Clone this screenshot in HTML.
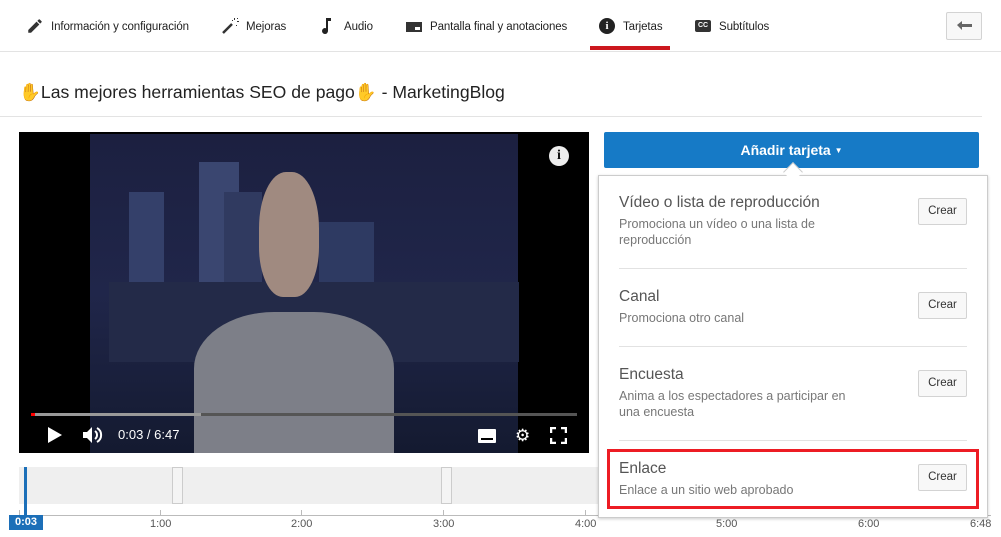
<!DOCTYPE html>
<html><head><meta charset="utf-8"><style>
*{margin:0;padding:0;box-sizing:border-box}
body{width:1001px;height:537px;overflow:hidden;background:#fff;font-family:"Liberation Sans",Arial,sans-serif;position:relative;color:#333}
.a{position:absolute}
.tab{position:absolute;top:21px;font-size:11.5px;color:#222;white-space:nowrap;letter-spacing:-0.1px}
.ic{position:absolute;top:17px}
.ttl{font-size:15.5px;color:#555}
.sub{font-size:12.5px;color:#777;line-height:16px}
.btn{position:absolute;left:918px;width:49px;height:27px;border:1px solid #d3d3d3;background:#f8f8f8;border-radius:2px;font-size:11.5px;color:#333;text-align:center;line-height:25px}
.sep{position:absolute;left:619px;width:348px;height:1px;background:#e2e2e2}
.tick{position:absolute;top:510px;width:1px;height:5px;background:#bbb}
.tl{position:absolute;top:518px;font-size:11px;color:#555}
</style></head><body>
<svg class="ic" style="left:26px" width="18" height="18" viewBox="0 0 24 24"><path fill="#333" d="M3 17.25V21h3.75L17.81 9.94l-3.75-3.75L3 17.25zM20.71 7.04a1 1 0 0 0 0-1.41l-2.34-2.34a1 1 0 0 0-1.41 0l-1.83 1.83 3.75 3.75 1.83-1.83z"/></svg>
<div class="tab" style="left:51px">Información y configuración</div>
<svg class="ic" style="left:221px" width="18" height="18" viewBox="0 0 18 18"><path stroke="#333" stroke-width="2.5" d="M2 16L11 7"/><path fill="#333" d="M13 1h1v2h-1zM16 4h2v1h-2zM11 3h1v1h-1zM15 8h1v1h-1zM16 1h1v1h-1z"/></svg>
<div class="tab" style="left:246px">Mejoras</div>
<svg class="ic" style="left:320px" width="14" height="18" viewBox="0 0 14 18"><path fill="#222" d="M6 1h5v3H8v10a3 3 0 1 1-2-2.8z"/></svg>
<div class="tab" style="left:344px">Audio</div>
<div class="a" style="left:406px;top:22px;width:16px;height:10px;background:#333"></div><div class="a" style="left:415px;top:27px;width:5px;height:3px;background:#fff"></div>
<div class="tab" style="left:430px">Pantalla final y anotaciones</div>
<div class="a" style="left:599px;top:18px;width:16px;height:16px;border-radius:50%;background:#222;color:#fff;font:bold 11px 'Liberation Serif';text-align:center;line-height:16px">i</div>
<div class="tab" style="left:623px">Tarjetas</div>
<div class="a" style="left:590px;top:46px;width:80px;height:4px;background:#cc181e"></div>
<div class="a" style="left:695px;top:20px;width:16px;height:12px;border-radius:2px;background:#333;color:#fff;font:bold 7px 'Liberation Sans';text-align:center;line-height:12px">CC</div>
<div class="tab" style="left:719px">Subtítulos</div>
<div class="a" style="left:946px;top:12px;width:36px;height:28px;border:1px solid #d3d3d3;background:#f8f8f8;border-radius:2px"><svg style="position:absolute;left:10px;top:8px" width="15" height="10" viewBox="0 0 15 10"><path fill="#666" d="M0 4l5-4v3h10v3H5v3z"/></svg></div>
<div class="a" style="left:0;top:51px;width:1001px;height:1px;background:#e3e3e3"></div>
<div class="a" style="left:19px;top:82px;font-size:17.6px;color:#222;white-space:nowrap">✋Las mejores herramientas SEO de pago✋ - MarketingBlog</div>
<div class="a" style="left:0;top:116px;width:982px;height:1px;background:#e3e3e3"></div>
<div class="a" style="left:19px;top:132px;width:570px;height:321px;background:#000;overflow:hidden">
 <div class="a" style="left:71px;top:2px;width:428px;height:319px;background:linear-gradient(#1c2040,#20264a 50%,#141a30)"></div>
 <div class="a" style="left:180px;top:30px;width:40px;height:150px;background:#3a4670"></div>
 <div class="a" style="left:110px;top:60px;width:35px;height:120px;background:#34406a"></div>
 <div class="a" style="left:205px;top:60px;width:38px;height:130px;background:#303a60"></div>
 <div class="a" style="left:300px;top:90px;width:55px;height:100px;background:#2e3a62"></div>
 <div class="a" style="left:90px;top:150px;width:410px;height:80px;background:#232a48"></div>
 <div class="a" style="left:240px;top:40px;width:60px;height:125px;border-radius:45% 45% 40% 40%;background:#a08a80"></div>
 <div class="a" style="left:175px;top:180px;width:200px;height:141px;border-radius:40% 40% 0 0;background:#7d7f88"></div>
 <div class="a" style="left:530px;top:14px;width:20px;height:20px;border-radius:50%;background:#eee;color:#111;font:bold 14px 'Liberation Serif';text-align:center;line-height:20px">i</div>
 <div class="a" style="left:12px;top:281px;width:546px;height:3px;background:#555"></div>
 <div class="a" style="left:12px;top:281px;width:170px;height:3px;background:#999"></div>
 <div class="a" style="left:12px;top:281px;width:4px;height:3px;background:#f00"></div>
 <svg class="a" style="left:28px;top:294px" width="16" height="18"><path fill="#fff" d="M1 1l14 8-14 8z"/></svg>
 <svg class="a" style="left:64px;top:294px" width="20" height="18" viewBox="0 0 20 18"><path fill="#fff" d="M0 6h4l5-5v16l-5-5H0z"/><path fill="none" stroke="#fff" stroke-width="2" d="M12 5a5 5 0 0 1 0 8M14 2a8 8 0 0 1 0 14"/></svg>
 <div class="a" style="left:99px;top:295px;color:#fff;font-size:13px">0:03 / 6:47</div>
 <div class="a" style="left:459px;top:297px;width:18px;height:14px;background:#fff;border-radius:1px"></div><div class="a" style="left:462px;top:306px;width:12px;height:2px;background:#000"></div>
 <div class="a" style="left:496px;top:296px;font-size:17px;color:#fff;line-height:16px">⚙</div>
 <svg class="a" style="left:531px;top:295px" width="17" height="17"><path fill="none" stroke="#fff" stroke-width="2.5" d="M1 6V1h5M11 1h5v5M16 11v5h-5M6 16H1v-5"/></svg>
</div>
<div class="a" style="left:19px;top:467px;width:580px;height:37px;background:#efefef"></div>
<div class="a" style="left:172px;top:467px;width:11px;height:37px;border:1px solid #ccc;background:#f4f4f4"></div>
<div class="a" style="left:441px;top:467px;width:11px;height:37px;border:1px solid #ccc;background:#f4f4f4"></div>
<div class="a" style="left:19px;top:515px;width:972px;height:1px;background:#bbb"></div>
<div class="tick" style="left:19px"></div><div class="tick" style="left:160px"></div><div class="tick" style="left:301px"></div><div class="tick" style="left:443px"></div><div class="tick" style="left:585px"></div>
<div class="tl" style="left:150px">1:00</div><div class="tl" style="left:291px">2:00</div><div class="tl" style="left:433px">3:00</div><div class="tl" style="left:575px">4:00</div><div class="tl" style="left:716px">5:00</div><div class="tl" style="left:858px">6:00</div><div class="tl" style="left:970px">6:48</div>
<div class="a" style="left:24px;top:467px;width:3px;height:50px;background:#1c6fb8"></div>
<div class="a" style="left:9px;top:515px;width:34px;height:15px;background:#1c6fb8;color:#fff;font-size:11px;font-weight:bold;text-align:center;line-height:15px">0:03</div>
<div class="a" style="left:604px;top:132px;width:375px;height:36px;background:#167ac6;border-radius:2px;color:#fff;font-size:14px;font-weight:bold;text-align:center;line-height:36px">Añadir tarjeta <span style="font-size:8px;vertical-align:2px">▼</span></div>
<div class="a" style="left:598px;top:175px;width:390px;height:343px;background:#fff;border:1px solid #ccc;box-shadow:0 1px 3px rgba(0,0,0,.2)"></div>
<div class="a" style="left:786px;top:165px;width:14px;height:14px;background:#fff;border-left:1px solid #ccc;border-top:1px solid #ccc;transform:rotate(45deg)"></div>
<div class="a ttl" style="left:619px;top:194px">Vídeo o lista de reproducción</div>
<div class="a sub" style="left:619px;top:216px">Promociona un vídeo o una lista de<br>reproducción</div>
<div class="btn" style="top:198px">Crear</div>
<div class="sep" style="top:268px"></div>
<div class="a ttl" style="left:619px;top:288px">Canal</div>
<div class="a sub" style="left:619px;top:310px">Promociona otro canal</div>
<div class="btn" style="top:292px">Crear</div>
<div class="sep" style="top:346px"></div>
<div class="a ttl" style="left:619px;top:366px">Encuesta</div>
<div class="a sub" style="left:619px;top:388px">Anima a los espectadores a participar en<br>una encuesta</div>
<div class="btn" style="top:370px">Crear</div>
<div class="sep" style="top:440px"></div>
<div class="a" style="left:607px;top:449px;width:372px;height:60px;border:3px solid #ed1c24"></div>
<div class="a ttl" style="left:619px;top:460px">Enlace</div>
<div class="a sub" style="left:619px;top:482px">Enlace a un sitio web aprobado</div>
<div class="btn" style="top:464px">Crear</div>
</body></html>
